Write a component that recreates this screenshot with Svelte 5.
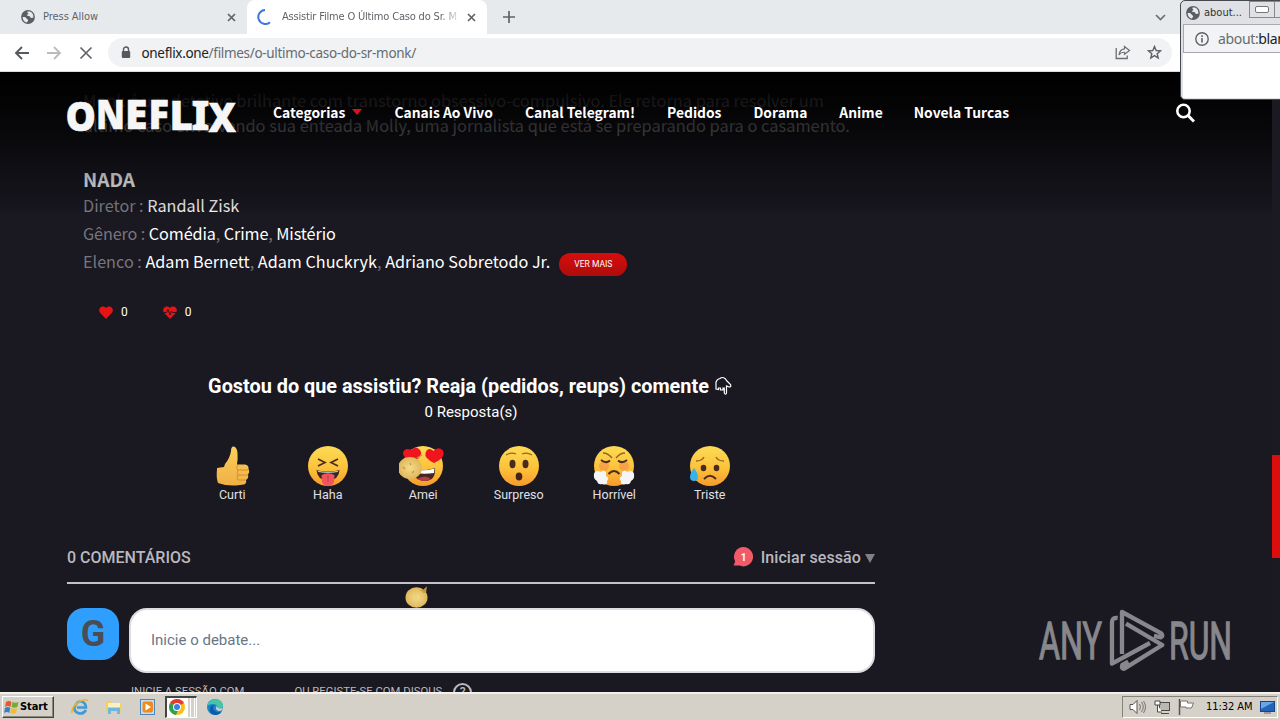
<script>
  const nav = [
    { label: 'Categorias', caret: true },
    { label: 'Canais Ao Vivo' },
    { label: 'Canal Telegram!' },
    { label: 'Pedidos' },
    { label: 'Dorama' },
    { label: 'Anime' },
    { label: 'Novela Turcas' }
  ];
  const logo = [
    ['O', 65.5, 131, 30.5], ['N', 96, 129, 29], ['E', 125, 129, 22.5], ['F', 148.5, 129, 20.5],
    ['L', 169.5, 129.5, 23.5], ['I', 191.5, 130, 18], ['X', 208.5, 132, 27.5]
  ];
  const reactions = ['Curti', 'Haha', 'Amei', 'Surpreso', 'Horrível', 'Triste'];
</script>

{#snippet globe()}
  <svg class="globe" width="14" height="14" viewBox="0 0 14 14">
    <circle cx="7" cy="7" r="6.9" fill="#5a5e63" />
    <path d="M1.6 7.2c1.6-.4 3.2.2 3.9 1.2.6.9 1.7.8 1.6 2-.1.8-1.1.9-1.1 2.1C3.300 12 1.600 9.800 1.600 7.200z M6.500 1.500c-.5 1.200.2 1.600 1 1.900 0 1-1.500.9-1.500 1.900 0 .9 1.700.6 2.500.9.9.3.8 1.500 1.900 1.700.8.1 1.300-.4 2-.5.3-2.800-1.300-5.300-3.700-5.900z" fill="#e8eaed" />
  </svg>
{/snippet}

{#snippet face(kind)}
  <svg class="emoji" width="48" height="42" viewBox="-24 -21 48 42">
    {#if kind === 'Curti'}
      <path d="M-15 3 Q-16 12-14 17 Q-6 20 4 19.500 L12 18.500 Q15 17 14 14 Q17 12 16 8.500 Q18 6 16.500 3 Q17 -1 13 -1.500 L5 -1.500 Q6 -7 5.500 -13 Q5 -19 1.500 -19.500 Q-1 -19.500-1 -15 Q-2 -8-7 -2 L-8 1 L-15 2 Z" fill="url(#skin)" />
      <path d="M5 4h11 M6 9h10 M6 14h8 M6 -1q-3 3 0 5 M6 4q-2 3 0 5 M6 9q-2 3 0 5" stroke="#cf8f35" stroke-width="1" fill="none" />
    {:else}
      <circle r="20" fill="url(#face)" />
      {#if kind === 'Haha'}
        <path d="M-10 -7l7 3.500-7 3.500M10 -7l-7 3.500 7 3.500" fill="none" stroke="#4d2b1c" stroke-width="1.700" />
        <path d="M-11.500 4Q0 7 11.500 4Q11 14 0 14.500Q-11 14-11.500 4z" fill="#3b2420" />
        <path d="M-10.500 4.600Q0 7 10.500 4.600L9.800 6Q0 8-9.800 6z" fill="#a9c4bd" />
        <path d="M-6.500 9Q0 5.500 6.500 9L6 16Q4.500 20 0 20Q-4.500 20-6 16z" fill="#f0545c" />
        <path d="M0 9v7" stroke="#cf3946" stroke-width="1" />
      {:else if kind === 'Amei'}
        <path d="M-9 5Q3 5 12 2Q13 14 3 15Q-5 15-9 10z" fill="#432720" />
        <path d="M-2 4.500Q6 4.500 11.500 2.500L11 7Q4 8-3 7.500z" fill="#fff" />
        <path d="M-6 13Q2 8 8 13Q2 17-6 13z" fill="#b33c48" />
        <path d="M11 -3Q1 -8 2.500 -13Q5 -20 10.500 -15Q15 -20 19.500 -16Q24 -9 11 -3z" fill="#f0141f" />
        <path d="M-9 -4Q-21 -8-20 -13.500Q-18 -19-12 -16Q-7 -21-3 -16Q1 -11-9 -4z" fill="#ee151e" />
        <ellipse cx="-13" cy="2" rx="12" ry="11" fill="url(#ball)" />
        <path d="M-6 -8l5-3M-20 1l2 2M-13 -3l1 2M-9 5l-2 2" stroke="#c3973f" stroke-width="1.200" />
      {:else if kind === 'Surpreso'}
        <ellipse cx="-6.500" cy="-2" rx="3" ry="4.200" fill="#4a2b1d" />
        <ellipse cx="6.500" cy="-2" rx="3" ry="4.200" fill="#4a2b1d" />
        <ellipse cy="10.500" rx="3.300" ry="4" fill="#432417" />
        <path d="M-13 -11Q-8 -14-3 -12M13 -11Q8 -14 3 -12" fill="none" stroke="#9a6322" stroke-width="1.300" />
      {:else if kind === 'Horrível'}
        <circle cx="-10" cy="0" r="5" fill="#f27a54" opacity=".45" />
        <circle cx="10" cy="0" r="5" fill="#f27a54" opacity=".45" />
        <path d="M-13 -6Q-8 -2-4 -5.500M13 -6Q8 -2 4 -5.500M-5.500 8Q0 2 5.500 8" fill="none" stroke="#4d2b1c" stroke-width="2" />
        <path d="M-11 -13Q-6 -13-2 -8M11 -13Q6 -13 2 -8" fill="none" stroke="#9a6322" stroke-width="1.300" />
        <path d="M-8 6Q-11 3-13 6Q-19 3-20 8Q-21 13-17 15Q-16 19-12 18Q-6 20-7 15Q-4 12-8 10zM8 6Q11 3 13 6Q19 3 20 8Q21 13 17 15Q16 19 12 18Q6 20 7 15Q4 12 8 10z" fill="#f5f5f8" />
      {:else}
        <ellipse cx="-6.500" cy="2" rx="2.800" ry="3.200" fill="#4a2b1d" />
        <ellipse cx="6.500" cy="2" rx="2.800" ry="3.200" fill="#4a2b1d" />
        <path d="M-14 -5Q-8 -5-6 -9M14 -5Q8 -5 6 -9" fill="none" stroke="#9a6322" stroke-width="1.400" />
        <path d="M-6 13Q0 6.500 6 13" fill="none" stroke="#4d2b1c" stroke-width="2" />
        <path d="M-16 2Q-12 7-12 11Q-12 15-16 15Q-20 15-20 11Q-20 7-16 2z" fill="#37b3ea" />
      {/if}
    {/if}
  </svg>
{/snippet}

<svg class="defs" width="0" height="0">
  <defs>
    <linearGradient id="face" x1="0" y1="0" x2="0" y2="1"><stop offset="0" stop-color="#fddb55" /><stop offset=".55" stop-color="#fcc23b" /><stop offset="1" stop-color="#f79a2c" /></linearGradient>
    <linearGradient id="skin" x1="0" y1="0" x2="0" y2="1"><stop offset="0" stop-color="#fbcf5a" /><stop offset="1" stop-color="#f0b045" /></linearGradient>
    <radialGradient id="ball"><stop offset="0" stop-color="#f4dc8c" /><stop offset="1" stop-color="#dfb75c" /></radialGradient>
  </defs>
</svg>

<div class="screen">
  <div class="tabs">
    <div class="tab idle">
      {@render globe()}
      <span class="t1">Press Allow</span>
      <svg class="x" width="9" height="9" viewBox="0 0 9 9"><path d="M1 1l7 7M8 1l-7 7" stroke="#5f6368" stroke-width="1.700" /></svg>
    </div>
    <div class="tab active">
      <svg width="16" height="16" viewBox="0 0 16 16"><path d="M8 1A7 7 0 1 0 13 13.200" fill="none" stroke="#3c77d8" stroke-width="2" /></svg>
      <span class="t2">Assistir Filme O Último Caso do Sr. M</span>
      <svg class="x" width="9" height="9" viewBox="0 0 9 9"><path d="M1 1l7 7M8 1l-7 7" stroke="#5f6368" stroke-width="1.700" /></svg>
    </div>
    <svg class="plus" width="12" height="12" viewBox="0 0 12 12"><path d="M6 0v12M0 6h12" stroke="#5f6368" stroke-width="1.700" /></svg>
    <svg class="chev" width="11" height="7" viewBox="0 0 11 7"><path d="M1 1l4.500 4.500L10 1" fill="none" stroke="#6b6f74" stroke-width="1.700" /></svg>
  </div>

  <div class="toolbar">
    <svg width="16" height="14" viewBox="0 0 16 14"><path d="M15 7H2M8 1L2 7l6 6" fill="none" stroke="#55595e" stroke-width="1.900" /></svg>
    <svg width="16" height="14" viewBox="0 0 16 14"><path d="M1 7h13M8 1l6 6-6 6" fill="none" stroke="#babcbe" stroke-width="1.800" /></svg>
    <svg class="stop" width="14" height="14" viewBox="0 0 14 14"><path d="M1.500 1.500l11 11M12.500 1.500l-11 11" stroke="#5f6368" stroke-width="1.700" /></svg>
    <div class="omni">
      <svg width="10" height="13" viewBox="0 0 10 13"><path d="M2.500 5.500V3.500a2.500 2.500 0 0 1 5 0V5.500" fill="none" stroke="#55595e" stroke-width="1.400" /><rect x=".8" y="5" width="8.400" height="7" rx="1" fill="#55595e" /></svg>
      <span class="url"><b>oneflix.one</b>/filmes/o-ultimo-caso-do-sr-monk/</span>
      <svg class="share" width="16" height="15" viewBox="0 0 16 15"><path d="M1.200 3v10.500h11V10.500" fill="none" stroke="#6b6f74" stroke-width="1.300" /><path d="M9.500 1.500L14.500 5.500 9.500 9.300V7.300Q6 7 4 10Q4.500 4.500 9.500 3.800z" fill="none" stroke="#6b6f74" stroke-width="1.200" /></svg>
      <svg width="15" height="15" viewBox="0 0 15 15"><path d="M7.500 1.500l1.700 4 4.300.4-3.300 2.800 1 4.200-3.700-2.300-3.700 2.300 1-4.200L1.500 5.900l4.300-.4z" fill="none" stroke="#5f6368" stroke-width="1.400" /></svg>
    </div>
  </div>

  <div class="page">
    <div class="content">
      <p class="desc"><span>Monk é um detetive brilhante com transtorno obsessivo-compulsivo. Ele retorna para resolver um</span><br /><span>último caso envolvendo sua enteada Molly, uma jornalista que está se preparando para o casamento.</span></p>
      <h4>NADA</h4>
      <div class="info i1">Diretor : <b>Randall Zisk</b></div>
      <div class="info i2">Gênero : <b>Comédia</b>, <b>Crime</b>, <b>Mistério</b></div>
      <div class="info i3"><span>Elenco : <b>Adam Bernett</b>, <b>Adam Chuckryk</b>, <b>Adriano Sobretodo Jr.</b></span><button>VER MAIS</button></div>
      <div class="votes">
        <svg width="14" height="13" viewBox="0 0 14 13"><path d="M7 13L1 6.800C-2 2.500 3.500-2 7 2c3.500-4 9 .5 6 4.800z" fill="#e81313" /></svg><span>0</span>
        <svg class="second" width="14" height="13" viewBox="0 0 14 13"><path d="M7 13L1 6.800C-2 2.500 3.500-2 7 2c3.500-4 9 .5 6 4.800z" fill="#e81313" /><path d="M0 6.500h3.500l1.500-3 2 5.500 1.500-4 1 1.500H14" fill="none" stroke="#1a1821" stroke-width=".9" /></svg><span>0</span>
      </div>
      <section class="thread">
        <h3><span>Gostou do que assistiu? Reaja (pedidos, reups) comente</span>
          <svg width="18" height="20" viewBox="0 0 18 20"><path d="M2 13V6Q3 3 6 2.500Q8 .5 11 2.500L13 5l3.500 3.500Q17.500 11 15 11L12.500 10v7q-.5 2.500-2.200 0v-5H9v2H6.500v-2H4.500v1.500z" fill="none" stroke="#fff" stroke-width="1.200" /></svg></h3>
        <div class="count">0 Resposta(s)</div>
        <div class="reactions">
          {#each reactions as r}
            <div class="reaction">{@render face(r)}<span>{r}</span></div>
          {/each}
        </div>
        <div class="bar">
          <span class="total">0 COMENTÁRIOS</span>
          <span class="login">
            <svg width="20" height="20" viewBox="0 0 20 20"><path d="M10.500 0a9.700 9.700 0 1 1-4 18.600L.5 18.500l1.700-4A9.700 9.700 0 0 1 10.500 0z" fill="#f05a69" /><text x="10.500" y="13.500" text-anchor="middle">1</text></svg>
            <b>Iniciar sessão</b>
            <svg class="tri" width="10" height="9" viewBox="0 0 10 9"><path d="M0 0h10L5 9z" fill="#818087" /></svg>
          </span>
        </div>
        <div class="compose">
          <div class="avatar">G</div>
          <div class="box">Inicie o debate...</div>
        </div>
        <div class="auth"><span>INICIE A SESSÃO COM</span><span class="reg">OU REGISTE-SE COM DISQUS</span><i>?</i></div>
        <svg class="drift" width="24" height="23" viewBox="0 0 24 23"><ellipse cx="11.500" cy="12.500" rx="11" ry="10.200" fill="url(#ball)" /><path d="M15 5l3 1 3-3-.5 4-3 0" fill="none" stroke="#cf9a31" stroke-width="1.300" /><path d="M11 6v14" stroke="#e9c878" /></svg>
      </section>
    </div>

    <header>
      <svg class="logo" width="174" height="40" viewBox="64 96 174 40">
        {#each logo as [c, x, y, w]}
          <text {x} {y} textLength={w} lengthAdjust="spacingAndGlyphs">{c}</text>
        {/each}
      </svg>
      <nav>
        {#each nav as n}
          <span>{n.label}{#if n.caret}<svg width="10" height="6" viewBox="0 0 10 6"><path d="M0 0h10L5 6z" fill="#d8121e" /></svg>{/if}</span>
        {/each}
      </nav>
      <svg class="search" width="19" height="20" viewBox="0 0 19 20"><circle cx="7.500" cy="8" r="6.200" fill="none" stroke="#fff" stroke-width="2.600" /><path d="M12 12.500l6 6" stroke="#fff" stroke-width="3" /></svg>
    </header>

    <div class="scroll"><div class="thumb"></div></div>

    <svg class="watermark" width="200" height="70" viewBox="1035 605 200 70">
      <text x="1039" y="659" textLength="63" lengthAdjust="spacingAndGlyphs">ANY</text>
      <text x="1169" y="659" textLength="63" lengthAdjust="spacingAndGlyphs">RUN</text>
      <g transform="translate(1020 590) scale(.3333)" fill="none" stroke="#88878c" stroke-width="13" stroke-linejoin="round">
        <path d="M293 84Q276 82 276 97V221L390 159" />
        <path d="M306 192V66L424 130Q431 138 422 142L402 138" />
        <path d="M318 101L427 165L313 236Q303 238 307 225L325 215" />
      </g>
    </svg>
  </div>

  <div class="taskbar">
    <div class="start">
      <svg width="15" height="14" viewBox="0 0 15 14"><path d="M2 2q3-2 5.500 0L6.500 7Q4 5 1 7z" fill="#e45b2d" /><path d="M8.500 2q3 1.500 6 0l-1.200 5q-3 1.500-5.800 0z" fill="#6fae3b" /><path d="M1 8q3-2 5.300 0L5.300 13Q3 11 0 13z" fill="#3c7bd0" /><path d="M7.300 8q3 1.500 5.800 0l-1.200 5q-3 1.500-5.600 0z" fill="#f3bd2d" /></svg>
      Start
    </div>
    <div class="apps">
      <svg width="18" height="18" viewBox="0 0 18 18"><path d="M15 12Q12 17 7 15Q2 13 4 8Q7 2 12 4Q15 6 15 9.500H6" fill="none" stroke="#3c9bd8" stroke-width="2.500" /><path d="M1 15Q0 9 8 4Q15 0 17 3" fill="none" stroke="#e9b52e" stroke-width="1.500" /></svg>
      <svg width="18" height="18" viewBox="0 0 18 18"><path d="M1 3h5l1 2h9v9H1z" fill="#f0cf69" /><path d="M3 5h12v4H3z" fill="#fbf0c0" /><path d="M3 16v-6h12v6h-3v-3H6v3z" fill="#6db7de" /></svg>
      <svg width="18" height="18" viewBox="0 0 18 18"><rect x="1.500" y="1.500" width="14" height="15" fill="#c9dcef" stroke="#4d87bd" /><rect x="3.500" y="3.500" width="10.500" height="11" rx="2" fill="#f08a1c" /><path d="M6.500 5.500l5.500 3.500-5.500 3.500z" fill="#fff" /></svg>
      <div class="chrome">
        <svg width="18" height="18" viewBox="0 0 18 18"><circle cx="9" cy="9" r="8" fill="#fbbf16" /><path d="M9 9L2.100 5A8 8 0 0 1 15.900 5z" fill="#e33b2e" /><path d="M9 9L2.100 5A8 8 0 0 0 8 17L11 10z" fill="#2fa04e" /><circle cx="9" cy="9" r="4" fill="#fff" /><circle cx="9" cy="9" r="3" fill="#3e7fe0" /></svg>
      </div>
      <svg width="18" height="18" viewBox="0 0 18 18"><circle cx="9" cy="9" r="8" fill="#1685cf" /><path d="M1 8Q3 1 10 1q7 1 7 7-1 4-6 3 1-5-4-5-4 0-6 2z" fill="#45c6a7" /><path d="M8 7Q5 12 11 14q3 1 5-1-2 4-7 4-6-1-5-7 1-3 4-3z" fill="#105aa8" /><path d="M10 8q2 4 7 2-1 3-3 3-5 0-4-5z" fill="#d5d1c8" /></svg>
    </div>
    <div class="tray">
      <svg width="18" height="16" viewBox="0 0 18 16"><path d="M1 5.500h3L8 1.500v13l-4-4H1z" fill="#fff" stroke="#55544f" /><path d="M10.500 5q2 3 0 6M12.500 3q3.500 5 0 10M14.500 2q4 6 0 12" fill="none" stroke="#77756f" /></svg>
      <svg width="17" height="16" viewBox="0 0 17 16"><rect x="5.500" y="3.500" width="10" height="8" fill="#b9b8b3" stroke="#4b4b48" /><path d="M1 2h5v4H1zM3.500 6v7H8M7 14.500h8" fill="#fff" stroke="#4b4b48" /></svg>
      <svg width="17" height="16" viewBox="0 0 17 16"><path d="M1.500 0v16" stroke="#55544f" stroke-width="1.500" /><path d="M2.500 2h7v2h6l-2 5H8V8H2.500z" fill="#fff" stroke="#77756f" /></svg>
      <span>11:32 AM</span>
      <svg width="15" height="13" viewBox="0 0 15 13"><rect x=".5" y=".5" width="14" height="10" fill="#2364bb" stroke="#16458d" /><path d="M1 1h13L1 8z" fill="#67a7e5" /><path d="M4 12h7" stroke="#888" stroke-width="1.500" /></svg>
    </div>
  </div>

  <div class="popup">
    <div class="ptitle">{@render globe()}<span>about...</span><div class="min"></div><div class="max"></div></div>
    <div class="pbar">
      <svg width="14" height="14" viewBox="0 0 14 14"><circle cx="7" cy="7" r="6.200" fill="none" stroke="#5f6368" stroke-width="1.400" /><path d="M7 6v4.500M7 3.300v1.600" stroke="#5f6368" stroke-width="1.600" /></svg>
      <span>about:<b>blank</b></span>
    </div>
    <div class="pbody"></div>
  </div>
</div>

<style>
  :global(body) { margin: 0; }
  .screen { position: relative; width: 1280px; height: 720px; overflow: hidden; display: flex; flex-direction: column; background: #1a1821; }
  .screen * { box-sizing: border-box; }
  svg { display: block; flex: none; }
  .defs { position: absolute; }
  span, b, h3, h4, button { white-space: nowrap; }

  .tabs { height: 34px; flex: none; background: #e7eaed; display: flex; align-items: center; font: 11px/16px "DejaVu Sans Condensed", "DejaVu Sans", sans-serif; color: #5f6368; }
  .tab { display: flex; align-items: center; height: 34px; }
  .tab .x { margin-left: auto; }
  .idle { width: 247px; padding: 0 11px 0 21px; gap: 8px; }
  .active { width: 240px; background: #fff; border-radius: 8px 8px 0 0; padding: 0 11px 0 10px; gap: 9px; }
  .t1 { letter-spacing: -0.05px; }
  .t2 { letter-spacing: -0.18px; width: 176px; overflow: hidden; -webkit-mask-image: linear-gradient(90deg, #000 158px, transparent 180px); mask-image: linear-gradient(90deg, #000 158px, transparent 180px); }
  .plus { margin-left: 16px; }
  .chev { margin-left: 640px; }

  .toolbar { height: 38px; flex: none; background: #fff; border-bottom: 1px solid #d9dbde; display: flex; align-items: center; padding: 0 0 0 14px; gap: 16px; }
  .stop { margin: 0 -1px 0 1px; }
  .omni { width: 1064px; height: 29px; border-radius: 15px; background: #f0f2f4; display: flex; align-items: center; padding: 0 10px 0 13px; }
  .url { margin-left: 10.5px; font: 13.5px/20px "Noto Sans", sans-serif; color: #676b70; letter-spacing: -0.32px; }
  .url b { font-weight: 400; color: #202124; }
  .share { margin-left: auto; margin-right: 16px; }

  .page { position: relative; height: 620px; flex: none; overflow: hidden; font-family: "Noto Sans CJK SC", "Noto Sans CJK JP", sans-serif; }
  .content { width: 875px; padding: 16px 0 0 67px; }
  .desc { margin: 0 0 28px 16px; font-size: 16.4px; line-height: 25px; color: #aeadb2; }
  h4 { margin: 0 0 0 16px; font-size: 19px; line-height: 25px; color: #fff; font-weight: 700; }
  .info { margin-left: 16px; height: 28px; display: block; font-size: 16.22px; line-height: 28px; color: #77767c; }
  .info b { font-weight: 400; color: #fff; }
  .i1 { color: #85848a; }
  .i2 { letter-spacing: -0.1px; }
  .i3 { display: flex; }
  button { margin: 6px 0 0 9px; width: 68px; height: 23px; padding: 0; border: 0; border-radius: 12px; background: linear-gradient(#d80d0d, #ae0c0c); color: #fff; font: 8.5px/23px Roboto, sans-serif; }
  .votes { height: 20px; margin: 27px 0 0 32px; display: flex; align-items: center; color: #fff; font: 12px/20px Roboto, sans-serif; }
  .votes span { margin-left: 8px; }
  .second { margin-left: 35px; }

  .thread { position: relative; padding-top: 52px; font-family: Roboto, sans-serif; }
  h3 { margin: 0; height: 26px; display: flex; align-items: center; justify-content: center; gap: 5px; color: #fff; font-size: 19.85px; line-height: 26px; font-weight: 700; }
  h3 svg { margin-right: 2px; margin-top: -2px; }
  .count { height: 24px; text-align: center; color: #fff; font-size: 15px; line-height: 24px; }
  .reactions { display: flex; margin: 21px 0 0 117.5px; }
  .reaction { width: 95.5px; display: flex; flex-direction: column; align-items: center; color: #e0e0e6; font-size: 12.5px; line-height: 15px; }
  .bar { height: 52px; margin-top: 30px; border-bottom: 2px solid #c3c2cb; display: flex; justify-content: space-between; align-items: center; color: #b9b8be; font-size: 16px; font-weight: 500; }
  .login { display: flex; align-items: center; }
  .login text { font: 700 10px Roboto, sans-serif; fill: #fff; }
  .login b { margin: 0 4px 0 8px; font-weight: 500; letter-spacing: .08px; }
  .tri { margin-top: 2px; }
  .compose { display: flex; gap: 10px; margin-top: 24px; }
  .avatar { width: 52px; height: 52px; border-radius: 17px; background: #2e9fff; color: #4a4e54; font: 700 36px/52px Roboto, sans-serif; text-align: center; }
  .box { flex: 1; height: 65px; border: 2px solid #dcdce2; border-radius: 18px; background: #fff; color: #687684; font-size: 15px; line-height: 60px; padding-left: 20px; }
  .auth { display: flex; align-items: center; height: 20px; margin: 9px 0 0 64px; color: #b9b8be; font-size: 11.3px; line-height: 20px; }
  .reg { margin-left: 50px; }
  .auth i { width: 19px; height: 19px; margin-left: 11px; border: 2px solid #b9b8be; border-radius: 50%; font: 500 12px/15px Roboto, sans-serif; text-align: center; }
  .drift { position: absolute; left: 338px; top: 263px; }

  header { position: absolute; inset: 0 8px auto 0; height: 148px; background: linear-gradient(#000 0, rgba(0, 0, 0, .86) 22%, rgba(0, 0, 0, .65) 45%, rgba(0, 0, 0, .45) 60%, rgba(0, 0, 0, .28) 75%, rgba(0, 0, 0, .14) 92%, transparent 96%); display: flex; align-items: flex-start; padding: 24px 77px 0 64px; }
  .logo text { font: 900 40px "Noto Sans", sans-serif; fill: #f6f6f6; stroke: #f6f6f6; stroke-width: .5px; }
  nav { display: flex; gap: 32px; margin: 4px 0 0 35px; font-size: 13.85px; line-height: 24px; font-weight: 700; color: #fff; }
  nav span { display: flex; align-items: center; gap: 7px; }
  nav span:nth-child(6) { margin-right: -1px; }
  .search { margin: 7px 0 0 auto; }
  .scroll { position: absolute; right: 0; top: 0; width: 8px; height: 620px; background: #1b1a23; }
  .thumb { height: 103px; margin-top: 383px; background: #dc0d0d; }
  .watermark { position: absolute; left: 1035px; top: 533px; }
  .watermark text { font: 400 52px Roboto, sans-serif; fill: #88878c; stroke: #88878c; stroke-width: 1.3px; }

  .taskbar { height: 28px; flex: none; background: #d5d1c8; border-top: 2px solid #f3f1ec; display: flex; align-items: center; }
  .start { margin-left: 2px; width: 52px; height: 22px; border: 1px solid; border-color: #fff #444 #444 #fff; box-shadow: inset -1px -1px #8b8880; display: flex; align-items: center; gap: 1px; padding-left: 1px; font: 700 11px/20px "DejaVu Sans Condensed", sans-serif; letter-spacing: -0.1px; color: #000; }
  .apps { display: flex; align-items: center; margin-left: 17px; gap: 16px; }
  .chrome { width: 32px; height: 22px; margin: 0 -7px 0 -8px; border: 1px solid; border-color: #444 #fff #fff #444; border-width: 2px 1px 1px 2px; background: linear-gradient(90deg, #fff 21px, #d5d1c8 21px 23px, #fff 23px 24px, #d5d1c8 24px 27px, #fff 27px 28px, #d5d1c8 28px); padding-left: 1px; }
  .tray { margin-left: auto; margin-right: 2px; width: 156px; height: 22px; border: 1px solid; border-color: #85827a #fff #fff #85827a; display: flex; align-items: center; padding-left: 6px; gap: 7px; font: 11px/20px "DejaVu Sans Condensed", sans-serif; color: #000; }
  .tray span { margin-left: 4px; letter-spacing: -0.05px; }

  .popup { position: absolute; left: 1180px; top: 0; width: 110px; height: 100px; border: 1px solid #45484d; border-radius: 5px; background: #dfe1e5; padding: 0 0 2px 2px; overflow: hidden; }
  .ptitle { height: 23px; display: flex; align-items: center; padding-left: 3px; font: 11px/16px "DejaVu Sans Condensed", sans-serif; color: #333; }
  .ptitle span { flex: none; margin-left: 4px; width: 45px; }
  .min, .max { flex: none; width: 26px; height: 17px; margin-top: -6px; border: 1px solid #85888d; display: grid; place-items: center; }
  .max { margin-left: -1px; }
  .min::after { content: ""; width: 12px; height: 5px; border: 1px solid #777; border-radius: 2px; background: #fff; }
  .pbar { height: 29px; border: 1px solid #a8aaad; background: #f1f3f4; display: flex; align-items: center; gap: 9px; padding-left: 11px; font: 14px/20px "Noto Sans", sans-serif; color: #676b70; letter-spacing: -0.35px; }
  .pbar b { color: #202124; font-weight: 400; }
  .pbody { height: 45px; background: #fff; }
</style>
